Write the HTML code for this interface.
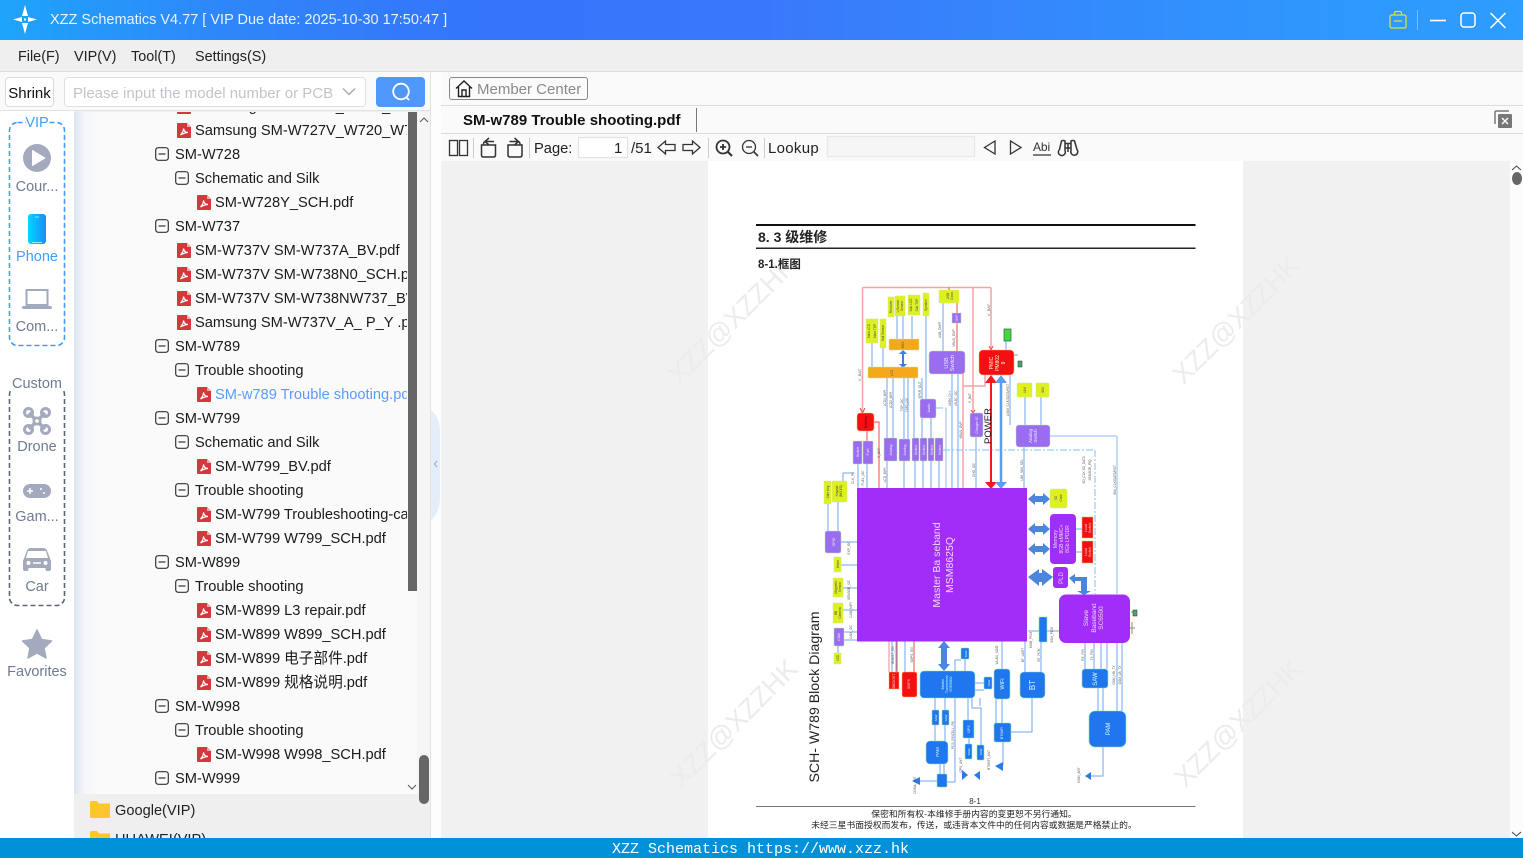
<!DOCTYPE html>
<html><head><meta charset="utf-8"><title>XZZ Schematics</title>
<style>
html,body{margin:0;padding:0}
body{width:1523px;height:858px;overflow:hidden;position:relative;background:#fff;font-family:"Liberation Sans","Noto Sans CJK SC",sans-serif;color:#111}
.a{position:absolute;white-space:nowrap}
#title{left:0;top:0;width:1523px;height:40px;background:linear-gradient(90deg,#1ea4fb 0,#2f86fa 15%,#3574fb 32%,#3a78fb 50%,#2f96fd 85%,#2d9dff 100%)}
.m{top:41px;line-height:33px;font-size:14.4px;color:#222}
.nl{left:0;width:74px;text-align:center;font-size:14.5px;color:#6e7b91;line-height:20px}
.r{height:24px;line-height:24px;font-size:14.65px;color:#1a1a1a}
.r svg{position:absolute;top:4px}
#tree .r{position:absolute;white-space:nowrap}
.wm{font-size:27px;color:#ececec;transform:rotate(-45deg);transform-origin:center;font-family:"Liberation Sans",sans-serif}
.t{font-size:15px;color:#222;line-height:20px}
#d text{font-family:"Liberation Sans",sans-serif;text-anchor:middle}
</style></head><body>
<svg width="0" height="0" style="position:absolute"><defs>
<symbol id="pdf" viewBox="0 0 14 15"><path d="M1 0H10L14 4V14a1 1 0 0 1-1 1H1a1 1 0 0 1-1-1V1a1 1 0 0 1 1-1z" fill="#d4373c"/><path d="M10 0V4H14z" fill="#f0a5a7"/><path d="M3.500 12C5.500 10 6.500 7.500 6.500 5.500C7 8 8.500 9.500 11 9.500C8.500 9.500 6 10.500 3.500 12z" fill="none" stroke="#fff" stroke-width="1.200"/></symbol>
<symbol id="min" viewBox="0 0 14 14"><rect x=".7" y=".7" width="12.600" height="12.600" rx="2.500" fill="none" stroke="#333" stroke-width="1.200"/><path d="M3.500 7H10.500" stroke="#333" stroke-width="1.200"/></symbol>
</defs></svg>

<div class="a" id="title"></div>
<svg class="a" style="left:10px;top:4px" width="30" height="31" viewBox="0 0 30 31"><g fill="#fff"><path d="M15 1L18 12H12z"/><path d="M15 30L18 19H12z"/><path d="M3 15.500L12 13V18z"/><path d="M27 15.500L18 13V18z"/><rect x="14" y="14.500" width="2" height="2"/></g></svg>
<div class="a" style="left:50px;top:10px;line-height:21px;font-size:14.5px;color:#e9f2ff">XZZ Schematics V4.77 [ VIP Due date: 2025-10-30 17:50:47 ]</div>
<svg class="a" style="left:1385px;top:8px" width="130" height="24" viewBox="0 0 130 24" fill="none"><path d="M6.500 7H19.500a1.500 1.500 0 0 1 1.500 1.500V18.500a1.500 1.500 0 0 1-1.500 1.500H6.500a1.500 1.500 0 0 1-1.500-1.500V8.500A1.500 1.500 0 0 1 6.500 7zM9.500 7V5a1.500 1.500 0 0 1 1.500-1.500h4A1.500 1.500 0 0 1 16.500 5V7M9 13H17" stroke="#d8e23a" stroke-width="1.300"/><path d="M32.500 2V22" stroke="#7cbcff"/><path d="M45 12.500H61" stroke="#fff" stroke-width="1.600"/><rect x="76" y="5" width="14" height="14" rx="3" stroke="#fff" stroke-width="1.500"/><path d="M105.500 5L120.500 20M120.500 5L105.500 20" stroke="#fff" stroke-width="1.500"/></svg>

<div class="a" style="left:0;top:40px;width:1523px;height:31px;background:#efefef;border-bottom:1px solid #dcdcdc"></div>
<div class="a m" style="left:18px">File(F)</div><div class="a m" style="left:74px">VIP(V)</div><div class="a m" style="left:131px">Tool(T)</div><div class="a m" style="left:195px">Settings(S)</div>

<!-- left pane -->
<div class="a" style="left:0;top:72px;width:430px;height:38px;background:#fafafa;border-bottom:1px solid #e2e2e2"></div>
<div class="a" style="left:5px;top:77px;width:47px;height:28px;border:1px solid #dcdcdc;border-radius:4px;background:#fff;font-size:15px;line-height:31px;text-align:center;color:#111">Shrink</div>
<div class="a" style="left:64px;top:77px;width:300px;height:28px;border:1px solid #dcdfe6;border-radius:4px;background:#fff;font-size:15px;line-height:31px;color:#c0c4cc;text-indent:8px">Please input the model number or PCB</div>
<svg class="a" style="left:342px;top:87px" width="14" height="10"><path d="M1 1.500L7 7.500L13 1.500" fill="none" stroke="#a8abb2" stroke-width="1.500"/></svg>
<div class="a" style="left:376px;top:77px;width:49px;height:30px;background:#4f97fb;border-radius:4px"></div>
<svg class="a" style="left:390px;top:81px" width="22" height="22" fill="none" stroke="#fff" stroke-width="1.800"><circle cx="11" cy="10.500" r="7.800"/><path d="M16 16L19 19"/></svg>

<div class="a" style="left:0;top:111px;width:74px;height:727px;background:#fff"></div>
<svg class="a" style="left:0;top:111px" width="74" height="727" viewBox="0 111 74 727">
<rect x="9.500" y="122.500" width="55" height="223" rx="8" fill="none" stroke="#409eff" stroke-width="1.600" stroke-dasharray="5 3"/>
<rect x="9.500" y="386.500" width="55" height="219" rx="8" fill="none" stroke="#5d6678" stroke-width="1.600" stroke-dasharray="5 3"/>
<rect x="26" y="115" width="23" height="14" fill="#fff"/><rect x="11" y="376" width="52" height="14" fill="#fff"/>
<circle cx="37" cy="158" r="14" fill="#a3aabd"/><path d="M32.500 150.500L45 158L32.500 165.500z" fill="#fff" stroke="#fff" stroke-linejoin="round"/>
<defs><linearGradient id="ph" x1="0" x2="1" y1="0" y2="0"><stop offset="0" stop-color="#00d8fb"/><stop offset="1" stop-color="#1b8dff"/></linearGradient></defs>
<rect x="28" y="214" width="18" height="30" rx="3" fill="url(#ph)"/><path d="M35 217H39M32 242.500H42" stroke="#bff" stroke-width=".8"/>
<path d="M26.500 290H47.500V305H26.500z" fill="#fff" stroke="#a3aabd" stroke-width="2"/><rect x="22" y="306" width="30" height="3" rx="1.500" fill="#a3aabd"/>
<g fill="#a3aabd"><circle cx="28.500" cy="412.500" r="4" fill="none" stroke="#a3aabd" stroke-width="3"/><circle cx="45.500" cy="412.500" r="4" fill="none" stroke="#a3aabd" stroke-width="3"/><circle cx="28.500" cy="429.500" r="4" fill="none" stroke="#a3aabd" stroke-width="3"/><circle cx="45.500" cy="429.500" r="4" fill="none" stroke="#a3aabd" stroke-width="3"/><path d="M29 413L45 429M45 413L29 429" stroke="#a3aabd" stroke-width="3.500"/><circle cx="37" cy="421" r="4.500"/><circle cx="37" cy="421" r="1.800" fill="#fff"/></g>
<rect x="23" y="484" width="28" height="14" rx="7" fill="#a3aabd"/><path d="M27 491H33M30 488V494" stroke="#fff" stroke-width="1.500"/><circle cx="41" cy="489" r="1" fill="#fff"/><circle cx="44" cy="493" r="1" fill="#fff"/>
<path d="M23 561L27 550.500Q28 548 31 548H43Q46 548 47 550.500L51 561V569Q51 571 49 571H47.500Q45.500 571 45.500 569V568H28.500V569Q28.500 571 26.500 571H25Q23 571 23 569z" fill="#a3aabd"/><path d="M28 551H46L48 558H26z" fill="#fff"/><circle cx="28.500" cy="563" r="2" fill="#fff"/><circle cx="45.500" cy="563" r="2" fill="#fff"/><path d="M33 563H41" stroke="#fff" stroke-width="1.500"/>
<path d="M37 630L41.500 639.500L51.500 641L44 648L46 658L37 653L28 658L30 648L22.500 641L32.500 639.500z" fill="#a3aabd" stroke="#a3aabd" stroke-width="1.500" stroke-linejoin="round"/>
</svg>
<div class="a nl" style="top:113px;color:#409eff">VIP</div>
<div class="a nl" style="top:177px">Cour...</div><div class="a nl" style="top:247px;color:#409eff">Phone</div><div class="a nl" style="top:317px">Com...</div>
<div class="a nl" style="top:374px">Custom</div><div class="a nl" style="top:437px">Drone</div><div class="a nl" style="top:507px">Gam...</div><div class="a nl" style="top:577px">Car</div><div class="a nl" style="top:662px">Favorites</div>

<div class="a" style="left:74px;top:111px;width:356px;height:727px;background:#efefef"></div>
<div class="a" id="tree" style="left:74px;top:112px;width:333px;height:682px;overflow:hidden;background:linear-gradient(90deg,#dce3f2 0,#f3f5f9 10px,#fafafa 22px,#fafafa 100%)">
<div style="position:absolute;left:-74px;top:-111px;width:481px;height:900px">
<div class="r" style="left:195px;top:94px"><svg style="left:-18px" width="14" height="15"><use href="#pdf"/></svg>Samsung SM-W727V_W720_W7</div>
<div class="r" style="left:195px;top:118px"><svg style="left:-18px" width="14" height="15"><use href="#pdf"/></svg>Samsung SM-W727V_W720_W727_SCH.pdf</div>
<div class="r" style="left:175px;top:142px"><svg style="left:-20px" width="14" height="14"><use href="#min"/></svg>SM-W728</div>
<div class="r" style="left:195px;top:166px"><svg style="left:-20px" width="14" height="14"><use href="#min"/></svg>Schematic and Silk</div>
<div class="r" style="left:215px;top:190px"><svg style="left:-18px" width="14" height="15"><use href="#pdf"/></svg>SM-W728Y_SCH.pdf</div>
<div class="r" style="left:175px;top:214px"><svg style="left:-20px" width="14" height="14"><use href="#min"/></svg>SM-W737</div>
<div class="r" style="left:195px;top:238px"><svg style="left:-18px" width="14" height="15"><use href="#pdf"/></svg>SM-W737V SM-W737A_BV.pdf</div>
<div class="r" style="left:195px;top:262px"><svg style="left:-18px" width="14" height="15"><use href="#pdf"/></svg>SM-W737V SM-W738N0_SCH.pdf</div>
<div class="r" style="left:195px;top:286px"><svg style="left:-18px" width="14" height="15"><use href="#pdf"/></svg>SM-W737V SM-W738NW737_BV.pdf</div>
<div class="r" style="left:195px;top:310px"><svg style="left:-18px" width="14" height="15"><use href="#pdf"/></svg>Samsung SM-W737V_A_ P_Y .pdf</div>
<div class="r" style="left:175px;top:334px"><svg style="left:-20px" width="14" height="14"><use href="#min"/></svg>SM-W789</div>
<div class="r" style="left:195px;top:358px"><svg style="left:-20px" width="14" height="14"><use href="#min"/></svg>Trouble shooting</div>
<div class="r" style="left:215px;top:382px;color:#5b9bff"><svg style="left:-18px" width="14" height="15"><use href="#pdf"/></svg>SM-w789 Trouble shooting.pdf</div>
<div class="r" style="left:175px;top:406px"><svg style="left:-20px" width="14" height="14"><use href="#min"/></svg>SM-W799</div>
<div class="r" style="left:195px;top:430px"><svg style="left:-20px" width="14" height="14"><use href="#min"/></svg>Schematic and Silk</div>
<div class="r" style="left:215px;top:454px"><svg style="left:-18px" width="14" height="15"><use href="#pdf"/></svg>SM-W799_BV.pdf</div>
<div class="r" style="left:195px;top:478px"><svg style="left:-20px" width="14" height="14"><use href="#min"/></svg>Trouble shooting</div>
<div class="r" style="left:215px;top:502px"><svg style="left:-18px" width="14" height="15"><use href="#pdf"/></svg>SM-W799 Troubleshooting-case.pdf</div>
<div class="r" style="left:215px;top:526px"><svg style="left:-18px" width="14" height="15"><use href="#pdf"/></svg>SM-W799 W799_SCH.pdf</div>
<div class="r" style="left:175px;top:550px"><svg style="left:-20px" width="14" height="14"><use href="#min"/></svg>SM-W899</div>
<div class="r" style="left:195px;top:574px"><svg style="left:-20px" width="14" height="14"><use href="#min"/></svg>Trouble shooting</div>
<div class="r" style="left:215px;top:598px"><svg style="left:-18px" width="14" height="15"><use href="#pdf"/></svg>SM-W899 L3 repair.pdf</div>
<div class="r" style="left:215px;top:622px"><svg style="left:-18px" width="14" height="15"><use href="#pdf"/></svg>SM-W899 W899_SCH.pdf</div>
<div class="r" style="left:215px;top:646px"><svg style="left:-18px" width="14" height="15"><use href="#pdf"/></svg>SM-W899 电子部件.pdf</div>
<div class="r" style="left:215px;top:670px"><svg style="left:-18px" width="14" height="15"><use href="#pdf"/></svg>SM-W899 规格说明.pdf</div>
<div class="r" style="left:175px;top:694px"><svg style="left:-20px" width="14" height="14"><use href="#min"/></svg>SM-W998</div>
<div class="r" style="left:195px;top:718px"><svg style="left:-20px" width="14" height="14"><use href="#min"/></svg>Trouble shooting</div>
<div class="r" style="left:215px;top:742px"><svg style="left:-18px" width="14" height="15"><use href="#pdf"/></svg>SM-W998 W998_SCH.pdf</div>
<div class="r" style="left:175px;top:766px"><svg style="left:-20px" width="14" height="14"><use href="#min"/></svg>SM-W999</div>
</div></div>
<div class="a" style="left:407px;top:112px;width:10px;height:682px;background:#fafafa"></div>
<div class="a" style="left:408px;top:112px;width:9px;height:479px;background:#666"></div>
<svg class="a" style="left:406px;top:782px" width="12" height="10"><path d="M2 3L6 7L10 3" fill="none" stroke="#555"/></svg>
<div class="a" style="left:417px;top:112px;width:13px;height:682px;background:#f5f5f5"></div>
<div class="a" style="left:419px;top:755px;width:10px;height:49px;background:#666;border-radius:5px"></div>
<svg class="a" style="left:418px;top:115px" width="12" height="10"><path d="M2 7L6 3L10 7" fill="none" stroke="#555"/></svg>
<svg class="a" style="left:90px;top:801px" width="20" height="17"><path d="M0 1.500Q0 0 1.500 0H7L9 2.500H20V17H0z" fill="#fdc62d"/></svg>
<div class="a" style="left:115px;top:800.500px;font-size:14.6px;line-height:20px;color:#222">Google(VIP)</div>
<svg class="a" style="left:90px;top:831px" width="20" height="8"><path d="M0 1.500Q0 0 1.500 0H7L9 2.500H20V8H0z" fill="#fdc62d"/></svg>
<div class="a" style="left:115px;top:829.500px;font-size:14.6px;line-height:20px;color:#222">HUAWEI(VIP)</div>

<div class="a" style="left:430px;top:72px;width:11px;height:766px;background:#fdfdfd;border-left:1px solid #e3e3e3;box-sizing:border-box"></div>
<svg class="a" style="left:431px;top:408px" width="10" height="114"><path d="M0 2Q9 10 9 24V90Q9 104 0 112z" fill="#e3eefa"/><path d="M6 53L3.500 56L6 59" fill="none" stroke="#8bb0d8"/></svg>

<!-- right pane -->
<div class="a" style="left:441px;top:72px;width:1082px;height:33px;background:#fafafa;border-bottom:1px solid #dcdcdc"></div>
<div class="a" style="left:449px;top:77px;width:137px;height:21px;border:1px solid #888;border-radius:3px;font-size:15px;line-height:23px;color:#8a8a8a;text-indent:27px">Member Center</div>
<svg class="a" style="left:455px;top:79px" width="18" height="19" fill="none" stroke="#222" stroke-width="1.400"><path d="M1 9.500L9 2L17 9.500M3.500 8V17.500H14.500V8M7 17.500V11H11V17.500"/></svg>
<div class="a" style="left:441px;top:106px;width:1082px;height:27px;background:#fafafa;border-bottom:1px solid #dcdcdc"></div>
<div class="a" style="left:463px;top:111px;font-size:15px;font-weight:bold;line-height:20px;color:#111">SM-w789 Trouble shooting.pdf</div>
<div class="a" style="left:696px;top:108px;width:1px;height:24px;background:#777"></div>
<svg class="a" style="left:1494px;top:110px" width="18" height="18"><path d="M1 14V2.500Q1 1 2.500 1H15" fill="none" stroke="#777" stroke-width="1.500"/><rect x="4" y="4" width="14" height="14" rx="1" fill="#777"/><path d="M8 8L14 14M14 8L8 14" stroke="#fff" stroke-width="1.400"/></svg>
<div class="a" style="left:441px;top:134px;width:1082px;height:27px;background:#fafafa"></div>
<svg class="a" style="left:441px;top:134px" width="660" height="27" viewBox="441 134 660 27" fill="none" stroke="#333" stroke-width="1.300">
<rect x="449.500" y="140.500" width="8" height="15"/><rect x="459.500" y="140.500" width="8" height="15"/><path d="M473.500 138V158" stroke="#ccc" stroke-width="1"/>
<path d="M481.500 145H495.500V155Q495.500 157 493.500 157H483.500Q481.500 157 481.500 155zM483.500 145V144Q483.500 141.500 486 141.500H494M489 138L485 141.500L489 145" stroke-width="1.500"/>
<path d="M508 145H522V155Q522 157 520 157H510Q508 157 508 155zM520 145V144Q520 141.500 517.500 141.500H509.500M514.500 138L518.500 141.500L514.500 145" stroke-width="1.500"/>
<path d="M529.500 138V158" stroke="#ccc" stroke-width="1"/>
<rect x="578.500" y="137.500" width="49" height="20" stroke="#e4e4e4" fill="#fff"/>
<path d="M658 147.500L665.500 141V144.500H675V150.500H665.500V154z"/><path d="M700 147.500L692.500 141V144.500H683V150.500H692.500V154z"/>
<path d="M708.500 138V158" stroke="#ccc" stroke-width="1"/>
<circle cx="723" cy="147" r="6.500" stroke-width="1.800"/><path d="M728 152L732 156" stroke-width="2"/><path d="M720 147H726M723 144V150" stroke-width="1.800"/>
<circle cx="749" cy="147" r="6.500"/><path d="M754 152L758 156" stroke-width="1.600"/><path d="M746 147H752"/>
<path d="M764.500 138V158" stroke="#ccc" stroke-width="1"/>
<rect x="827.500" y="136.500" width="147" height="20" stroke="#e8e8e8" fill="#f6f6f6"/>
<path d="M995 141L984.500 147.500L995 154zM1010.500 141L1021 147.500L1010.500 154z"/>
<path d="M1033 155H1051" />
<path d="M1061.500 141Q1063.500 140 1065 141V150.500A3.500 3.500 0 1 1 1059.500 149.500zM1071 141Q1073 140 1074.500 141L1077 149.500A3.500 3.500 0 1 1 1071 150.500zM1065 143.500H1071M1065 148H1071M1068 143.500V152" stroke-width="1.500"/>
</svg>
<div class="a t" style="left:534px;top:138.500px;font-size:14.700px">Page:</div>
<div class="a t" style="left:614px;top:138.500px">1</div>
<div class="a t" style="left:631px;top:138.500px">/51</div>
<div class="a t" style="left:768px;top:138.500px;letter-spacing:.3px">Lookup</div>
<div class="a" style="left:1033px;top:141px;font-size:12px;line-height:13px;color:#333;letter-spacing:-.1px">Abi</div>

<div class="a" style="left:441px;top:161px;width:1069px;height:677px;background:#f1f1f1"></div>
<div class="a" style="left:1510px;top:161px;width:13px;height:677px;background:#fcfcfc"></div>
<svg class="a" style="left:1510px;top:164px" width="13" height="8"><path d="M2 6L6.500 2L11 6" fill="none" stroke="#444"/></svg>
<svg class="a" style="left:1510px;top:830px" width="13" height="8"><path d="M2 2L6.500 6L11 2" fill="none" stroke="#444"/></svg>
<div class="a" style="left:1512px;top:172px;width:10px;height:13px;background:#666;border-radius:50%"></div>
<div class="a" style="left:708px;top:161px;width:535px;height:677px;background:#fff"></div>

<div class="a wm" style="left:649px;top:305px">XZZ@XZZHK</div>
<div class="a wm" style="left:1153px;top:305px">XZZ@XZZHK</div>
<div class="a wm" style="left:651px;top:708px">XZZ@XZZHK</div>
<div class="a wm" style="left:1155px;top:708px">XZZ@XZZHK</div>

<svg class="a" id="d" style="left:708px;top:161px;filter:blur(.35px)" width="535" height="677" viewBox="708 161 535 677">
<style>
.w{fill:none;stroke:#6fa5ee;stroke-width:1}.l{fill:none;stroke:#b3d0f5;stroke-width:1.500}.rd{fill:none;stroke:#f04a4a;stroke-width:1}.pk{fill:none;stroke:#f7a0a5;stroke-width:1.500}
.y{fill:#dff01f;stroke:#cfe88a;stroke-width:.5}.p{fill:#9a6cf0;stroke:#b7e6a8;stroke-width:.5}.v{fill:#a22cf8}.b{fill:#1f76ef;stroke:#8ee0a8;stroke-width:.6}.R{fill:#f50f12;stroke:#e8c060;stroke-width:.5}.o{fill:#f4a81c;stroke:#d0e880;stroke-width:.5}
.s{font-size:3.200px;fill:#555}.k{font-size:4px;fill:#666}.W{fill:#e8dcfa}.Y{font-size:3.200px;fill:#445}
</style>
<rect x="756" y="224" width="439.500" height="2" fill="#111"/><rect x="756" y="247.500" width="439.500" height="1.500" fill="#222"/>
<text x="758" y="242" style="text-anchor:start;font-size:14px;font-weight:bold;font-family:'Liberation Sans','Noto Sans CJK SC',sans-serif" fill="#222">8. 3 级维修</text>
<text x="758" y="268" style="text-anchor:start;font-size:11.500px;font-weight:bold;font-family:'Liberation Sans','Noto Sans CJK SC',sans-serif" fill="#222">8-1.框图</text>

<!-- wires -->
<path class="pk" d="M862.500 287.500H991M862.500 287.500V413M991 287.500V350M973 287.500V413M963 374V488M963 386H985V375"/>
<path class="rd" d="M949 287.500V290M957 303V351M867 431V441M879 488V422H874"/>
<path class="rd" d="M860 408L862.500 413L865 408M989 346L991 350L993 346M971 410L973 413L975 410"/>
<path class="w" d="M943 303V351M887 378V438M893 378V438M904 378V439M908 378V439M914 378V438M926 316V399M952 374V488M958 374V488M976 437V488M1025 397V425M1041 397V425M1024 447V488M1010 375V425M858 464V488M867 464V488M887 461V488M904 461V488M915 461V488M923 461V488M931 461V488M939 461V488M922 378V438M931 418V438M1006 341V350M1011 355H1018M897 316V339M903 316V339M912 316V339M872 343V367M883 348V367M843 473H853M843 473V481"/>
<path class="l" d="M1117 436V594M1050 436H1117M946 408V488"/>
<path d="M1095 450V594M943 450H1095M936 408H946" fill="none" stroke="#7cc0f0" stroke-dasharray="7 2 2 2"/>
<path class="w" d="M828 504V531M838 502V531M841 542H857M841 565H857M843 588H857M843 610H857M844 632H857M844 640H857M838 646V653M1067 499H1052M1076 529H1082M1076 552H1082"/>
<path class="w" d="M892 641V672M896 641V672M905 641V672M914 641V672M965 659V671M955 671V660H961M1002 641V669M1025 641V672M1041 642V672M1028 631H1039M1047 631H1059M1085 643V669M1094 643V669M1101 643V669M1107 643V669M1117 643V711M1122 643V711M1098 688V711M1103 688V711M975 683H984M975 690H984M996 699V723M1002 699V723M1032 698V732H1011M935 698V710M945 698V710M935 725V741M945 725V741M940 764V774M944 764V774M947 782H955V698M968 698V720M969 738V744M981 760V708H972V698M980 698V706M1003 742V765M1103 747V776H1090M937 781H920"/>
<path d="M889 641V672" fill="none" stroke="#e88"/><path d="M897 641V672M914 641V672" fill="none" stroke="#f44"/>
<path d="M1132 622V634M1128 628H1135M1131 612H1133" fill="none" stroke="#888"/>
<path d="M912 781L920 777V785zM962 770L968 775L962 780zM974 775L980 771V780zM995 766L1003 762V771zM1085 776L1091 772V780z" fill="#2a7ae8"/>

<!-- power -->
<path d="M991 378V484" stroke="#f21a1a" stroke-width="2" fill="none"/><path d="M985 383L991 375L997 383zM985 482L991 489L997 482z" fill="#f21a1a"/>
<path d="M1001 378V484" stroke="#5b9df5" stroke-width="2.500" fill="none"/><path d="M995 383L1001 375L1007 383zM995 482L1001 489L1007 482z" fill="#5b9df5"/>
<path d="M903 351V366" stroke="#3b7fe0" stroke-width="2"/><path d="M899 354L903 350L907 354zM899 364L903 368L907 364z" fill="#3b7fe0"/>
<!-- thick arrows -->
<g fill="#4a86de"><path d="M1028 499L1035 493V496H1043V493L1050 499L1043 505V502H1035V505z"/><path d="M1028 529L1035 523V526H1043V523L1050 529L1043 535V532H1035V535z"/><path d="M1028 549L1035 543V546H1043V543L1050 549L1043 555V552H1035V555z"/><path d="M1028 577L1039 569V573H1042V569L1053 577L1042 586V582H1039V586z"/>
<path d="M1069 578L1075 574V577H1087V591H1091L1084 595L1077 591H1081V581H1075V584z"/>
<path d="M944 641L950 648H947V664H950L944 671L938 664H941V648H938z"/></g>

<!-- blocks -->
<rect class="v" x="857" y="488" width="170" height="153.500"/>
<text class="W" transform="rotate(-90 940 565)" x="940" y="565" style="font-size:10.500px">Master Ba seband</text>
<text class="W" transform="rotate(-90 953 565)" x="953" y="565" style="font-size:10.500px">MSM8625Q</text>
<rect class="v" x="1059" y="594.500" width="71" height="48.500" rx="7"/>
<text class="W" transform="rotate(-90 1088 618)" x="1088" y="618" style="font-size:6.500px">Slave</text><text class="W" transform="rotate(-90 1096 618)" x="1096" y="618" style="font-size:6.500px">Baseband</text><text class="W" transform="rotate(-90 1103 618)" x="1103" y="618" style="font-size:6.500px">SC6500</text>
<rect class="v" x="1050" y="514" width="26" height="50" rx="4"/>
<text class="W" transform="rotate(-90 1057 539)" x="1057" y="539" style="font-size:5px">Memory</text><text class="W" transform="rotate(-90 1063 539)" x="1063" y="539" style="font-size:5px">8GB eMMC+</text><text class="W" transform="rotate(-90 1069 539)" x="1069" y="539" style="font-size:5px">8Gb LPDDR</text>
<rect class="v" x="1053" y="567" width="15" height="21" rx="3"/><text class="W" transform="rotate(-90 1063 578)" x="1063" y="578" style="font-size:6px">PLD</text>

<rect class="R" x="979" y="350" width="35" height="25" rx="4"/><text transform="rotate(-90 993 363)" x="993" y="363" style="font-size:5px" fill="#ffd">PMIC</text><text transform="rotate(-90 999 363)" x="999" y="363" style="font-size:5px" fill="#ffd">PM802</text><text transform="rotate(-90 1005 363)" x="1005" y="363" style="font-size:5px" fill="#ffd">9</text>
<rect class="R" x="857" y="413" width="17" height="18" rx="3"/><text transform="rotate(-90 867 422)" x="867" y="422" style="font-size:4px" fill="#700">Battery</text>
<rect class="R" x="1082" y="517" width="11" height="21"/><rect class="R" x="1082" y="541" width="11" height="22"/>
<rect class="R" x="889" y="672" width="10" height="17"/><rect class="R" x="902" y="672" width="15" height="25" rx="2"/>
<text transform="rotate(-90 1087 528)" x="1087" y="528" style="font-size:3.500px" fill="#fcc">Load</text><text transform="rotate(-90 1091 528)" x="1091" y="528" style="font-size:3.500px" fill="#fcc">Switch</text>
<text transform="rotate(-90 1087 552)" x="1087" y="552" style="font-size:3.500px" fill="#fcc">Load</text><text transform="rotate(-90 1091 552)" x="1091" y="552" style="font-size:3.500px" fill="#fcc">Switch</text>
<text transform="rotate(-90 895 681)" x="895" y="681" style="font-size:3.500px" fill="#fcc">DBOOST</text><text transform="rotate(-90 910 684)" x="910" y="684" style="font-size:3.500px" fill="#fcc">SMPS</text>

<rect class="o" x="868" y="367" width="50" height="11" rx="1"/><rect class="o" x="889" y="339" width="30" height="11" rx="1"/>
<text transform="rotate(-90 893 373)" x="893" y="373" class="s">LCD</text><text transform="rotate(-90 904 345)" x="904" y="345" class="s">BOX</text>

<g>
<rect class="y" x="939" y="290" width="20" height="13" rx="1"/>
<rect class="y" x="866" y="319" width="6" height="24"/><rect class="y" x="872" y="319" width="6" height="24"/><rect class="y" x="880" y="319" width="6" height="29"/>
<rect class="y" x="888" y="297" width="6" height="20"/><rect class="y" x="895" y="296" width="10" height="20"/><rect class="y" x="908" y="295" width="6" height="20"/><rect class="y" x="914" y="295" width="6" height="20"/><rect class="y" x="923" y="293" width="6" height="23"/>
<rect class="y" x="1017" y="383" width="15" height="14" rx="1"/><rect class="y" x="1036" y="383" width="13" height="14" rx="1"/>
<rect class="y" x="824" y="481" width="7" height="23" rx="1"/><rect class="y" x="832" y="481" width="15" height="21" rx="1"/>
<rect class="y" x="834" y="557" width="7" height="15"/><rect class="y" x="833" y="578" width="10" height="19"/><rect class="y" x="833" y="603" width="10" height="20"/><rect class="y" x="834" y="653" width="7" height="11"/>
<rect class="y" x="1050" y="489" width="17" height="19" rx="2"/>
</g>
<text transform="rotate(-90 870 331)" x="870" y="331" class="Y">Main LCD</text><text transform="rotate(-90 876 331)" x="876" y="331" class="Y">Main TSP</text><text transform="rotate(-90 884 333)" x="884" y="333" class="Y">Hall Sensor</text><text transform="rotate(-90 892 307)" x="892" y="307" class="Y">Receiver</text><text transform="rotate(-90 899 306)" x="899" y="306" class="Y">L/Sensor</text><text transform="rotate(-90 903 306)" x="903" y="306" class="Y">Sensor</text><text transform="rotate(-90 912 305)" x="912" y="305" class="Y">Sub LCD</text><text transform="rotate(-90 918 305)" x="918" y="305" class="Y">Sub TSP</text><text transform="rotate(-90 927 305)" x="927" y="305" class="Y">Speaker</text><text transform="rotate(-90 949 296)" x="949" y="296" class="Y">USB</text><text transform="rotate(-90 953 296)" x="953" y="296" class="Y">Conn</text><text transform="rotate(-90 1026 390)" x="1026" y="390" class="Y">UIM</text><text transform="rotate(-90 1044 390)" x="1044" y="390" class="Y">SIM</text><text transform="rotate(-90 829 492)" x="829" y="492" class="Y">Side Key</text><text transform="rotate(-90 838 491)" x="838" y="491" class="Y">Keypad</text><text transform="rotate(-90 842 491)" x="842" y="491" class="Y">(BKLED)</text><text transform="rotate(-90 839 564)" x="839" y="564" class="Y">Motor</text><text transform="rotate(-90 837 587)" x="837" y="587" class="Y">Magnetic</text><text transform="rotate(-90 841 587)" x="841" y="587" class="Y">Sensor</text><text transform="rotate(-90 837 613)" x="837" y="613" class="Y">BB</text><text transform="rotate(-90 841 613)" x="841" y="613" class="Y">Camera</text><text transform="rotate(-90 839 658)" x="839" y="658" class="Y">LED</text><text transform="rotate(-90 1057 498)" x="1057" y="498" class="Y">SD</text><text transform="rotate(-90 1062 498)" x="1062" y="498" class="Y">Card</text>
<g>
<rect class="p" x="929" y="351" width="36" height="23" rx="3"/><rect class="p" x="952" y="313" width="9" height="10"/><rect class="p" x="920" y="399" width="16" height="19" rx="2"/><rect class="p" x="970" y="413" width="13" height="24" rx="2"/><rect class="p" x="1016" y="425" width="34" height="22" rx="3"/>
<rect class="p" x="853" y="441" width="9" height="23" rx="1"/><rect class="p" x="863" y="441" width="10" height="23" rx="1"/><rect class="p" x="884" y="438" width="13" height="23" rx="1"/><rect class="p" x="899" y="439" width="11" height="22" rx="1"/><rect class="p" x="912" y="438" width="7" height="23" rx="1"/><rect class="p" x="920" y="438" width="7" height="23" rx="1"/><rect class="p" x="928" y="438" width="6" height="23" rx="1"/><rect class="p" x="935" y="438" width="8" height="23" rx="1"/>
<rect class="p" x="825" y="531" width="16" height="22" rx="2"/><rect class="p" x="834" y="628" width="10" height="18" rx="1"/>
</g>
<text transform="rotate(-90 948 363)" x="948" y="363" style="font-size:5.500px" fill="#eef">USB</text><text transform="rotate(-90 954 363)" x="954" y="363" style="font-size:5.500px" fill="#eef">Switch</text>
<text transform="rotate(-90 1032 436)" x="1032" y="436" style="font-size:4.500px" fill="#eef">Analog</text><text transform="rotate(-90 1037 436)" x="1037" y="436" style="font-size:4.500px" fill="#eef">Switch</text>
<text transform="rotate(-90 978 425)" x="978" y="425" style="font-size:3.500px" fill="#eef">Charger IC</text>
<text transform="rotate(-90 892 450)" x="892" y="450" style="font-size:3.500px" fill="#eef">Analog</text><text transform="rotate(-90 906 450)" x="906" y="450" style="font-size:3.500px" fill="#eef">Analog</text>
<text transform="rotate(-90 917 450)" x="917" y="450" style="font-size:3.500px" fill="#eef">Switch</text><text transform="rotate(-90 925 450)" x="925" y="450" style="font-size:3.500px" fill="#eef">Switch</text><text transform="rotate(-90 933 450)" x="933" y="450" style="font-size:3.500px" fill="#eef">Switch</text><text transform="rotate(-90 941 450)" x="941" y="450" style="font-size:3.500px" fill="#eef">Switch</text>
<text transform="rotate(-90 835 542)" x="835" y="542" style="font-size:3.500px" fill="#eef">GPIO</text><text transform="rotate(-90 840 637)" x="840" y="637" style="font-size:3.500px" fill="#eef">CAM</text><text transform="rotate(-90 930 408)" x="930" y="408" style="font-size:3.500px" fill="#eef">Audio</text><text transform="rotate(-90 958 318)" x="958" y="318" style="font-size:3.200px" fill="#eef">OVP</text><text transform="rotate(-90 859 452)" x="859" y="452" style="font-size:3.500px" fill="#eef">Switch</text><text transform="rotate(-90 869 452)" x="869" y="452" style="font-size:3.500px" fill="#eef">Fuel</text>

<rect x="1004" y="329" width="7" height="12" fill="#44d840" stroke="#264" stroke-width=".7"/>
<rect x="1018" y="361" width="4" height="6" fill="#4a6" stroke="#234" stroke-width=".5"/><rect x="1133" y="610" width="4" height="6" fill="#4a6" stroke="#234" stroke-width=".5"/>

<g>
<rect class="b" x="920" y="671" width="55" height="27" rx="4"/><rect class="b" x="961" y="648" width="8" height="11" rx="1"/><rect class="b" x="984" y="677" width="8" height="12" rx="1"/><rect class="b" x="994" y="669" width="16" height="30" rx="3"/><rect class="b" x="1020" y="672" width="25" height="26" rx="4"/><rect class="b" x="1082" y="669" width="26" height="19" rx="3"/><rect class="b" x="1089" y="711" width="37" height="36" rx="6"/>
<rect class="b" x="932" y="710" width="7" height="15" rx="1"/><rect class="b" x="942" y="710" width="7" height="15" rx="1"/><rect class="b" x="963" y="720" width="11" height="18" rx="1"/><rect class="b" x="965" y="744" width="7" height="15" rx="1"/><rect class="b" x="977" y="745" width="7" height="15" rx="1"/><rect class="b" x="994" y="723" width="17" height="19" rx="2"/><rect class="b" x="926" y="741" width="22" height="23" rx="4"/><rect class="b" x="937" y="774" width="10" height="13" rx="1"/><rect class="b" x="1039" y="617" width="8" height="25" rx="1"/>
</g>
<text transform="rotate(-90 944 684)" x="944" y="684" style="font-size:3.500px" fill="#cfe">Master</text><text transform="rotate(-90 948 684)" x="948" y="684" style="font-size:3.500px" fill="#cfe">Transceiver</text><text transform="rotate(-90 952 684)" x="952" y="684" style="font-size:3.500px" fill="#cfe">RTR6500</text>
<text transform="rotate(-90 1004 684)" x="1004" y="684" style="font-size:5.500px" fill="#dff">WiFi</text>
<text transform="rotate(-90 1035 685)" x="1035" y="685" style="font-size:8px" fill="#eef">BT</text>
<text transform="rotate(-90 1097 679)" x="1097" y="679" style="font-size:6px" fill="#dff">SAW</text>
<text transform="rotate(-90 1110 729)" x="1110" y="729" style="font-size:6px" fill="#dff">PAM</text>
<text transform="rotate(-90 939 752)" x="939" y="752" style="font-size:4.500px" fill="#dff">PAM</text>
<text transform="rotate(-90 1003 733)" x="1003" y="733" style="font-size:3.500px" fill="#dff">BT/WiFi</text>
<text transform="rotate(-90 970 729)" x="970" y="729" style="font-size:3.500px" fill="#dff">GPS</text>
<text transform="rotate(-90 937 718)" x="937" y="718" style="font-size:3px" fill="#dff">SAW</text><text transform="rotate(-90 947 718)" x="947" y="718" style="font-size:3px" fill="#dff">SAW</text><text transform="rotate(-90 970 752)" x="970" y="752" style="font-size:3px" fill="#dff">SAW</text><text transform="rotate(-90 982 752)" x="982" y="752" style="font-size:3px" fill="#dff">SAW</text><text transform="rotate(-90 967 654)" x="967" y="654" style="font-size:3px" fill="#dff">SAW</text><text transform="rotate(-90 990 683)" x="990" y="683" style="font-size:3px" fill="#dff">SAW</text>

<!-- small labels -->
<g class="k">
<text transform="rotate(-90 861 375)" x="861" y="375" class="k">V_BAT</text><text transform="rotate(-90 990 310)" x="990" y="310" class="k">V_BAT</text><text transform="rotate(-90 941 330)" x="941" y="330" class="s">USB_DM/P</text><text transform="rotate(-90 955 338)" x="955" y="338" class="s">VBUS_OVP</text><text transform="rotate(-90 886 398)" x="886" y="398" class="s">LCD1_MIPI</text><text transform="rotate(-90 892 400)" x="892" y="400" class="s">LCD2_MIPI</text><text transform="rotate(-90 903 405)" x="903" y="405" class="s">TSP_I2C</text><text transform="rotate(-90 908 405)" x="908" y="405" class="s">TSP2_I2C</text><text transform="rotate(-90 921 390)" x="921" y="390" class="s">SPKR_OUT</text><text transform="rotate(-90 951 398)" x="951" y="398" class="s">MSM_D+/-</text><text transform="rotate(-90 957 398)" x="957" y="398" class="s">MUIC_I2C</text><text transform="rotate(-90 962 430)" x="962" y="430" class="s">VBUS_OVP</text><text transform="rotate(-90 971 398)" x="971" y="398" class="s">V_BAT</text><text transform="rotate(-90 1009 400)" x="1009" y="400" class="s">USIM_CLK/DATA/RST</text><text transform="rotate(-90 1023 470)" x="1023" y="470" class="s">UIM_SWI_SEL</text><text transform="rotate(-90 975 470)" x="975" y="470" class="s">CHG_I2C</text><text transform="rotate(-90 1116 480)" x="1116" y="480" class="s">SIM_CLK/DATA/RST</text><text transform="rotate(-90 1085 470)" x="1085" y="470" class="s">SD_CLK SD_DATA</text><text transform="rotate(-90 1091 470)" x="1091" y="470" class="s">SENSOR_IRQ</text><text transform="rotate(-90 854 478)" x="854" y="478" class="s">CLK_PA</text><text transform="rotate(-90 864 478)" x="864" y="478" class="s">FUEL_I2C</text><text transform="rotate(-90 880 453)" x="880" y="453" class="s">V_BAT</text><text transform="rotate(-90 886 475)" x="886" y="475" class="s">LCD_MIPI</text>
<text transform="rotate(-90 850 548)" x="850" y="548" class="s">EXP_I2C</text><text transform="rotate(-90 850 590)" x="850" y="590" class="s">SENSOR_I2C</text><text transform="rotate(-90 852 610)" x="852" y="610" class="s">CAM_MIPI</text><text transform="rotate(-90 852 632)" x="852" y="632" class="s">CAM_I2C</text>
<text transform="rotate(-90 894 655)" x="894" y="655" class="s">BOOST_EN</text><text transform="rotate(-90 913 655)" x="913" y="655" class="s">SMPS_EN</text><text transform="rotate(-90 998 655)" x="998" y="655" class="s">WLAN_SDIO</text><text transform="rotate(-90 1024 655)" x="1024" y="655" class="s">BT_UART</text><text transform="rotate(-90 1040 655)" x="1040" y="655" class="s">BT_PCM</text><text transform="rotate(-90 1032 640)" x="1032" y="640" class="s">MSM_PCM</text><text transform="rotate(-90 1053 635)" x="1053" y="635" class="s">SSM_PCM</text><text transform="rotate(-90 1084 655)" x="1084" y="655" class="s">RX_P/N</text><text transform="rotate(-90 1093 655)" x="1093" y="655" class="s">TX_P/N</text>
<text transform="rotate(-90 1115 675)" x="1115" y="675" class="s">GSM_HB_TX</text><text transform="rotate(-90 1121 675)" x="1121" y="675" class="s">GSM_LB_TX</text><text transform="rotate(-90 916 785)" x="916" y="785" class="s">CDMA_ANT</text><text transform="rotate(-90 1080 775)" x="1080" y="775" class="s">GSM_ANT</text><text transform="rotate(-90 962 765)" x="962" y="765" class="s">GPS_ANT</text><text transform="rotate(-90 990 760)" x="990" y="760" class="s">BT/WIFI_ANT</text><text transform="rotate(-90 954 735)" x="954" y="735" class="s">PCS_RX/CELL_RX</text>
</g>

<text transform="rotate(-90 991 426)" x="991" y="426" style="font-size:9.500px" fill="#111">POWER</text>
<text transform="rotate(-90 819 697)" x="819" y="697" style="font-size:14px" fill="#222" textLength="171" lengthAdjust="spacingAndGlyphs">SCH- W789 Block Diagram</text>

<text x="975" y="804" style="font-size:8px" fill="#333">8-1</text>
<path d="M756 806.500H1195.500" stroke="#777"/>
<text x="974" y="817" style="font-size:8.800px;font-family:'Noto Sans CJK SC',sans-serif" fill="#222">保密和所有权-本维修手册内容的变更恕不另行通知。</text>
<text x="974" y="828" style="font-size:8.800px;font-family:'Noto Sans CJK SC',sans-serif" fill="#222">未经三星书面授权而发布，传送，或违背本文件中的任何内容或数据是严格禁止的。</text>
</svg>

<div class="a" style="left:0;top:838px;width:1523px;height:20px;background:#0091d8"></div>
<div class="a" style="left:612px;top:840px;font-family:'Liberation Mono',monospace;font-size:15px;line-height:19px;color:#fff">XZZ Schematics https://www.xzz.hk</div>
</body></html>
